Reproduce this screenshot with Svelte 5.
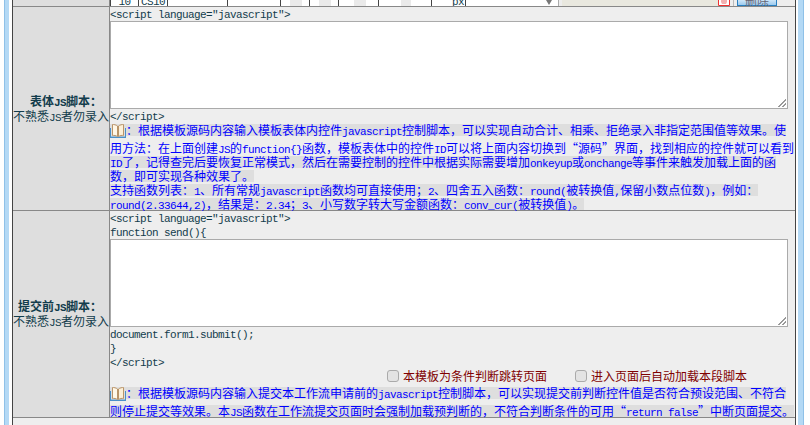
<script>
  // splits a line in ascii runs and cjk runs, the ascii ones get the narrow font
  function parts(text) {
    return text.split(/([\x00-\x7f]+)/).filter((p) => p !== '').map((p) => ({
      text: p,
      latin: /^[\x00-\x7f]+$/.test(p)
    }));
  }

  // clipped row left over from the table above
  const cols = [
    { w: 29, text: '10' },
    { w: 29, text: 'CS10', left: true },
    { w: 60 },
    { w: 53 },
    { w: 29, shade: [9, 12] },
    { w: 29, shade: [9, 12] },
    { w: 40, shade: [15, 12] },
    { w: 53, shade: [22, 10] },
    { w: 34, text: 'px', right: true }
  ];

  const formNote = [
    { text: '：根据模板源码内容输入模板表体内控件javascript控制脚本，可以实现自动合计、相乘、拒绝录入非指定范围值等效果。使', icon: true },
    { text: '用方法：在上面创建JS的function{}函数，模板表体中的控件ID可以将上面内容切换到“源码”界面，找到相应的控件就可以看到', plain: true },
    { text: 'ID了，记得查完后要恢复正常模式，然后在需要控制的控件中根据实际需要增加onkeyup或onchange等事件来触发加载上面的函' },
    { text: '数，即可实现各种效果了。' },
    { text: '支持函数列表：1、所有常规javascript函数均可直接使用；2、四舍五入函数：round(被转换值,保留小数点位数)，例如：' },
    { text: 'round(2.33644,2)，结果是：2.34；3、小写数字转大写金额函数：conv_cur(被转换值)。' }
  ];

  const submitNote = [
    { text: '：根据模板源码内容输入提交本工作流申请前的javascript控制脚本，可以实现提交前判断控件值是否符合预设范围、不符合', icon: true },
    { text: '则停止提交等效果。本JS函数在工作流提交页面时会强制加载预判断的，不符合判断条件的可用“return false”中断页面提交。' }
  ];
</script>

{#snippet rich(text)}{#each parts(text) as p}{#if p.latin}<span class="latin">{p.text}</span>{:else}{p.text}{/if}{/each}{/snippet}

{#snippet book()}
  <svg class="book" width="16" height="14" viewBox="0 0 16 14">
    <path d="M0 4v10h16V4h-1v8.500H1V4z" fill="#4a90c8" />
    <path d="M2.500 .5C4 .5 6 .8 7.500 2v10.500C6 11.500 4 11.200 2.500 11.500z" fill="#fff8e8" stroke="#b99468" />
    <path d="M13.500 .5C12 .5 10 .8 8.500 2v10.500c1.500-1 3.500-1.300 5-1z" fill="#fcf0d8" stroke="#b99468" />
  </svg>
{/snippet}

{#snippet note(lines)}
  {#each lines as line}
    <div class="line" class:first={line.icon}>
      <span class="text" class:hl={!line.plain}>{#if line.icon}{@render book()}{/if}{@render rich(line.text)}</span>
    </div>
  {/each}
{/snippet}

<div class="page">
  <div class="side left"></div>
  <div class="main">
    <div class="row top">
      <div class="label"></div>
      <div class="strip">
        {#each cols as c}
          <div class="col" class:to-left={c.left} class:to-right={c.right} style="width: {c.w}px">
            {#if c.shade}<i class="shade" style="margin-left: {c.shade[0]}px; width: {c.shade[1]}px"></i>{/if}
            {#if c.text}<span class="latin">{c.text}</span>{/if}
          </div>
        {/each}
        <div class="select"><i class="arrow"></i></div>
        <div class="beige"></div>
        <svg class="del-icon" width="12" height="6" viewBox="0 0 12 6">
          <path d="M.5 0v5.500h11V0" fill="#fff" stroke="#ee3333" />
          <path d="M3 0v2l1 2h4l1-2V0z" fill="#f3b0b0" />
        </svg>
        <div class="btn-wrap"><div class="btn">删除</div></div>
      </div>
    </div>

    <div class="row form-row">
      <div class="label">
        <b>{@render rich('表体JS脚本：')}</b>
        <span>{@render rich('不熟悉JS者勿录入')}</span>
      </div>
      <div class="field">
        <div class="code">&lt;script language="javascript"&gt;</div>
        <div class="box"><i class="grip"></i></div>
        <div class="code after">&lt;/script&gt;</div>
        {@render note(formNote)}
      </div>
    </div>

    <div class="row submit-row">
      <div class="label">
        <b>{@render rich('提交前JS脚本：')}</b>
        <span>{@render rich('不熟悉JS者勿录入')}</span>
      </div>
      <div class="field">
        <div class="code">&lt;script language="javascript"&gt;</div>
        <div class="code">function send()&#123;</div>
        <div class="box"><i class="grip"></i></div>
        <div class="code">document.form1.submit();</div>
        <div class="code">&#125;</div>
        <div class="code">&lt;/script&gt;</div>
        <div class="checks">
          <label><input type="checkbox" />本模板为条件判断跳转页面</label>
          <label><input type="checkbox" />进入页面后自动加载本段脚本</label>
        </div>
        {@render note(submitNote)}
      </div>
    </div>
  </div>
  <div class="side right"></div>
</div>

<style>
  :global(body) {
    background: #fff;
    overflow: hidden;
  }

  .page {
    display: flex;
    width: 810px;
    height: 425px;
    overflow: hidden;
    font-family: "Noto Sans CJK SC", "Liberation Sans", sans-serif;
    font-size: 12px;
    line-height: 14px;
    color: #123c4c;
    background: #fff;
  }

  .side {
    box-sizing: border-box;
    flex: none;
    background: #b4d9f5;
  }
  .side.left {
    width: 5px;
    margin: 0 3px 0 4px;
    border-left: 1px solid #8fc1e8;
  }
  .side.right {
    width: 6px;
    margin-left: 2px;
    border-right: 1px solid #8fc1e8;
  }

  .main {
    box-sizing: border-box;
    width: 784px;
    border-left: 1px solid #444;
    border-right: 1px solid #444;
    background: #eee;
  }

  .row {
    display: flex;
    border-bottom: 1px solid #888;
  }
  .top {
    height: 6px;
    overflow: hidden;
  }
  .form-row {
    height: 203px;
  }
  .submit-row {
    height: 206px;
  }

  .label {
    box-sizing: border-box;
    flex: none;
    width: 97px;
    display: flex;
    flex-direction: column;
    justify-content: center;
    background: #dedede;
    border-right: 1px solid #888;
    white-space: nowrap;
  }
  .label b {
    text-align: right;
    padding-right: 7px;
  }
  .label b .latin {
    font-weight: bold;
  }

  .latin {
    font-family: "Liberation Mono", monospace;
    font-size: 11px;
    letter-spacing: -0.6px;
    line-height: 1;
    white-space: pre;
  }

  .strip {
    display: flex;
    align-items: flex-end;
    flex: 1;
    height: 6px;
  }
  .col {
    box-sizing: border-box;
    flex: none;
    height: 6px;
    display: flex;
    align-items: flex-end;
    justify-content: center;
    background: #fff;
    border-right: 1px solid #444;
    color: #123c4c;
    position: relative;
  }
  .col:first-child {
    border-left: 1px solid #444;
  }
  .to-left {
    justify-content: flex-start;
    padding-left: 2px;
  }
  .to-right {
    justify-content: flex-end;
    padding-right: 1px;
  }
  .col .latin {
    line-height: 8px;
    height: 8px;
    flex: none;
  }
  .shade {
    width: 12px;
    height: 6px;
    margin-right: auto;
    background: #eaeaea;
  }
  .select {
    box-sizing: border-box;
    flex: none;
    width: 93px;
    height: 6px;
    background: #fff;
    border-right: 1px solid #aaa;
    display: flex;
    justify-content: flex-end;
    padding-right: 6px;
  }
  .arrow {
    width: 0;
    height: 0;
    border: 3px solid transparent;
    border-top: 5px solid #777;
    border-bottom: 0;
  }
  .beige {
    flex: none;
    width: 156px;
    height: 6px;
    margin-left: 3px;
    background: #e9e8df;
  }
  .del-icon {
    flex: none;
  }
  .btn-wrap {
    flex: none;
    width: 47px;
    height: 6px;
    padding-left: 3px;
    box-sizing: border-box;
    border-left: 1px solid #bbb;
    background: #eee;
    margin-left: 3px;
  }
  .btn {
    box-sizing: border-box;
    width: 40px;
    height: 6px;
    display: flex;
    align-items: flex-end;
    justify-content: center;
    background: linear-gradient(#cfe6f8, #9ccbef);
    border: 1px solid #2a7fc0;
    border-top: 0;
    color: #667;
    line-height: 9px;
  }

  .field {
    flex: 1;
    min-width: 0;
    white-space: nowrap;
  }
  .code {
    height: 14px;
    font-family: "Liberation Mono", monospace;
    font-size: 11px;
    letter-spacing: -0.6px;
    line-height: 17px;
    white-space: pre;
  }
  .code.after {
    margin-bottom: 1px;
  }

  .box {
    box-sizing: border-box;
    position: relative;
    width: 678px;
    height: 88px;
    background: #fff;
    border: 1px solid #aaa;
  }
  .grip {
    position: absolute;
    right: 1px;
    bottom: 1px;
    width: 8px;
    height: 8px;
    background: linear-gradient(135deg, transparent 50%, #999 50%, #999 58%, transparent 58%, transparent 74%, #999 74%, #999 82%, transparent 82%);
  }

  .checks {
    display: flex;
    justify-content: flex-end;
    gap: 28px;
    height: 18px;
    padding-right: 48px;
    color: #800000;
  }
  .checks label {
    display: flex;
    align-items: flex-start;
    height: 14px;
  }
  .checks input {
    appearance: none;
    box-sizing: border-box;
    width: 12px;
    height: 12px;
    margin: 1px 4px 0 0;
    background: #e3e3e3;
    border: 1px solid #aaa;
    border-radius: 3px;
  }

  .line {
    height: 14px;
  }
  .line.first {
    height: 17px;
  }
  .text {
    display: inline-block;
    height: 12px;
    line-height: 12px;
    vertical-align: top;
    margin-top: 1px;
    color: #00f;
  }
  .line.first .text {
    margin-top: 0;
  }
  .hl {
    background: #dedede;
  }
  .book {
    vertical-align: top;
  }
</style>
